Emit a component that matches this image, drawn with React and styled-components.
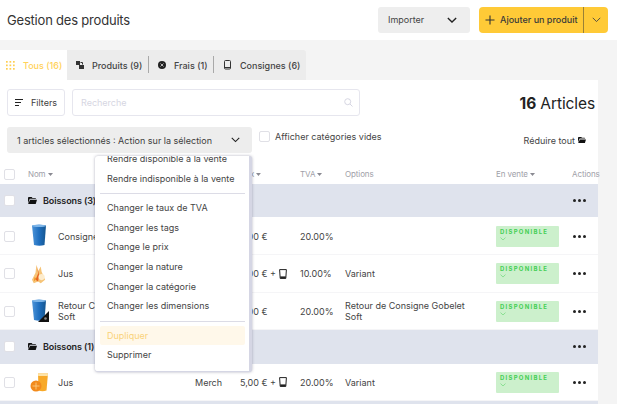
import React from "react";
import styled, { createGlobalStyle } from "styled-components";

const Global = createGlobalStyle`
  html, body { margin: 0; padding: 0; height: 404px; overflow: hidden; background: #f4f4f4; }
  body { font-family: Inter, "Noto Sans", sans-serif; color: #3c3c3c; -webkit-font-smoothing: antialiased; }
  * { box-sizing: border-box; }
`;

const Page = styled.div`width: 617px; height: 404px; overflow: hidden; background: #f4f4f4;`;
const Header = styled.header`
  height: 40px; background: #fff; display: flex; align-items: center; justify-content: space-between; padding: 0 9px 1px 7px;
`;
const Title = styled.h1`margin: 0; font-size: 13px; font-weight: 400; color: #333; letter-spacing: -.2px;`;
const HeaderActions = styled.div`display: flex; gap: 9px;`;
const ImportButton = styled.div`
  width: 92px; height: 26px; background: #eeeeee; border-radius: 3px; display: flex; align-items: center; justify-content: space-between;
  padding: 0 13px 0 10px; font-size: 9px; color: #444;
`;
const AddButton = styled.div`
  width: 129px; height: 26px; background: #ffca37; border-radius: 4px; display: flex; align-items: center; font-size: 9px; font-weight: 500; color: #3a3a3a;
`;
const AddMain = styled.div`flex: 1; display: flex; align-items: center; gap: 5px; padding-left: 6px; height: 100%; border-right: 1px solid #9a8136; white-space: nowrap;`;
const AddCaret = styled.div`width: 24px; display: flex; justify-content: center; align-items: center;`;

const TabBar = styled.nav`
  margin-top: 10px; width: 306px; height: 30px; display: flex; background: #ececec; border-radius: 0 3px 0 0;
`;
const Tab = styled.div`
  display: flex; align-items: center; gap: 8px; height: 100%; font-size: 9px; font-weight: 500; padding-left: ${p => p.$pl}px; width: ${p => p.$w}px; white-space: nowrap;
  color: ${p => (p.$active ? "#ffd25a" : "#444")};
  background: ${p => (p.$active ? "#fff" : "transparent")};
  position: relative;
  ${p => p.$sep && `&::after { content: ""; position: absolute; right: 0; top: 6px; height: 17px; width: 1px; background: #a9a9a9; }`}
`;

const Panel = styled.main`width: 598px; background: #fff; height: 324px;`;
const Tools = styled.div`display: flex; justify-content: space-between; padding: 9px 3px 0 7px;`;
const ToolsLeft = styled.div`display: flex; flex-direction: column; gap: 11px;`;
const SearchRow = styled.div`display: flex; gap: 7px;`;
const FilterButton = styled.div`
  width: 58px; height: 27px; border: 1px solid #e6e6ee; border-radius: 3px; display: flex; align-items: center; gap: 8px; padding-left: 7px; font-size: 9px; color: #3d3d3d;
`;
const SearchBox = styled.div`
  width: 288px; height: 27px; border: 1px solid #e6e6ee; border-radius: 3px; display: flex; align-items: center; justify-content: space-between;
  padding: 0 6px 0 8px; font-size: 9px; color: #d6d6e2;
`;
const ActionRow = styled.div`display: flex; gap: 7px; position: relative; height: 26px;`;
const ActionSelect = styled.div`
  width: 245px; height: 26px; background: #ededed; border-radius: 3px; display: flex; align-items: center; justify-content: space-between;
  padding: 0 12px 0 10px; font-size: 9px; color: #3d3d3d; white-space: nowrap;
`;
const EmptyOption = styled.label`display: flex; gap: 5px; font-size: 9px; line-height: 12px; color: #444; padding-top: 4px; height: 16px; white-space: nowrap;`;
const Box = styled.span`
  display: block; width: 11px; height: 11px; border: 1px solid #e0e0e6; border-radius: 2px; background: #fff; flex: none;
`;
const ToolsRight = styled.div`display: flex; flex-direction: column; align-items: flex-end;`;
const Count = styled.div`font-size: 15.5px; color: #222; height: 27px; line-height: 30px; letter-spacing: -.1px; b { font-weight: 700; }`;
const Collapse = styled.div`display: flex; align-items: center; gap: 3px; margin-top: 18px; margin-right: 9px; height: 12px; font-size: 9px; color: #444;`;

const Table = styled.div`margin-top: 7px;`;
const grid = `display: grid; grid-template-columns: 28px 167px 45px 60px 45px 151px 76px 26px; align-items: center;`;
const HeadRow = styled.div`${grid} height: 24px; font-size: 8px; letter-spacing: -.1px; color: #a0a0a8; padding-top: 4px;`;
const SortLabel = styled.span`display: flex; align-items: center; gap: 2px; white-space: nowrap; ${p => p.$end && "justify-content: flex-end; width: 21px;"}`;
const CheckCell = styled.div`padding-left: 4px;`;
const GroupRow = styled.div`${grid} height: 33.4px; background: #dfe3ed;`;
const GroupName = styled.div`display: flex; align-items: center; gap: 6px; font-size: 9px; font-weight: 600; color: #222; grid-column: 2 / 7; white-space: nowrap; letter-spacing: -.1px;`;
const Row = styled.div`${grid} height: 37.6px; font-size: 9px; color: #444; border-bottom: 1px solid #f5f5f7; padding-top: 1px;`;
const NameCell = styled.div`display: flex; align-items: center; gap: 9px; white-space: nowrap; line-height: 11px;`;
const Thumb = styled.div`width: 20px; display: flex; justify-content: center; flex: none; margin-left: 1px;`;
const PriceCell = styled.div`display: flex; align-items: center; gap: 3px; white-space: nowrap;`;
const OptionCell = styled.div`line-height: 11px; max-width: 130px;`;
const Badge = styled.div`
  width: 63px; height: 21px; background: #ccf0cc; border-radius: 1px; padding: 3px 4px; font-size: 6px; font-weight: 700; letter-spacing: 1.25px; color: #45cf55; line-height: 6px; white-space: nowrap;
  svg { display: block; margin-top: 2px; }
`;
const Dots = styled.div`display: flex; gap: 2px; margin-left: 1px;`;
const Dot = styled.i`display: block; width: 3px; height: 3px; border-radius: 50%; background: #222;`;

const Menu = styled.div`
  position: absolute; left: 88px; top: 29px; width: 157px; height: 216px; background: #fff; overflow: hidden; z-index: 5;
  border-right: 3px solid #d5d6e4; border-bottom: 1px solid #d5d6e4; border-radius: 3px; box-shadow: 0 0 3px rgba(80,80,110,.45);
  padding: 0 4px 0 5px;
`;
const MenuList = styled.div`margin-top: -7px;`;
const MenuItem = styled.div`
  height: 19.7px; line-height: 19.7px; font-size: 9px; padding-left: 7px; white-space: nowrap; border-radius: 2px;
  color: ${p => (p.$hl ? "#fad37a" : "#444")}; background: ${p => (p.$hl ? "#fff8ea" : "transparent")};
`;
const MenuLine = styled.div`height: 1px; background: #dcdce6; margin: 5px 0 3.5px;`;

const Chevron = ({ w = 12, sw = 2, c = "#222" }) => (
  <svg width={w} height={w * 0.6} viewBox="0 0 12 7" fill="none"><path d="M1 1l5 5 5-5" stroke={c} strokeWidth={sw} /></svg>
);
const Caret = () => <svg width="5" height="3" viewBox="0 0 5 3"><path d="M0 0h5L2.5 3z" fill="#8a8a92" /></svg>;
const Folder = ({ w = 9 }) => (
  <svg width={w} height={w * 0.8} viewBox="0 0 10 8"><path d="M0 1q0-1 1-1h3l1 1h3q1 0 1 1H2L0 7zM2.3 3H10L8.5 8H0z" fill="#111" /></svg>
);
const Glass = ({ s = 10 }) => (
  <svg width={s * 0.8} height={s} viewBox="0 0 8 10" fill="none"><path d="M.6.6h6.8L6.8 9.4H1.2z" stroke="#222" strokeWidth="1" /><path d="M1.2 7.4h5.6v2H1.2z" fill="#222" /></svg>
);
const Cup = ({ deposit }) => (
  <svg width="19" height="24" viewBox="-1 0 19 24">
    <defs><linearGradient id="cupg" x1="0" x2="1"><stop offset="0" stopColor="#4d94d8" /><stop offset=".5" stopColor="#1f6fc0" /><stop offset="1" stopColor="#15568f" /></linearGradient></defs>
    <path d="M1 1.500q7-1.500 14 0L13.500 21q-5 1.500-10.500 0z" fill="url(#cupg)" />
    <ellipse cx="8" cy="1.800" rx="7" ry="1.300" fill="#7db5e8" />
    {deposit && <path d="M18 12v11H7z" fill="#111" />}
    {deposit && <circle cx="14.500" cy="19.500" r="1.300" fill="#888" />}
  </svg>
);
const Fruit = () => (
  <svg width="14" height="22" viewBox="0 0 16 23">
    <path d="M5 1l2 7 3-5 1 6 4 9-5 4-3-2-5 2-2-4 4-8z" fill="#f6c477" />
    <path d="M6 3l1 8-3 7 3 2 1-8z" fill="#e8641f" />
    <circle cx="11" cy="15" r="3.500" fill="#fdeccd" />
    <path d="M3 15l2 2-3 3z" fill="#f29322" />
  </svg>
);
const Juice = () => (
  <svg width="19" height="20" viewBox="0 0 19 20">
    <path d="M8 1.500h10L16.500 18.500q-4 1.500-8 0z" fill="#f8a928" />
    <path d="M8 1.500h10l-.2 2.500H8.200z" fill="#fde3a8" />
    <circle cx="6" cy="14" r="5.500" fill="#f28a1c" />
    <path d="M6 10.500v7M2.500 14h7" stroke="#fcd28d" strokeWidth=".8" />
  </svg>
);

const items1 = ["Changer le taux de TVA", "Changer les tags", "Change le prix", "Changer la nature", "Changer la catégorie", "Changer les dimensions"];

const rows = {
  a: [
    { icon: <Cup />, name: "Consigne", price: "5,00 €", tva: "20.00%" },
    { icon: <Fruit />, name: "Jus", price: "5,00 € +", glass: true, tva: "10.00%", opt: "Variant" },
    { icon: <Cup deposit />, name: <>Retour Consigne<br />Soft</>, price: "5,00 €", tva: "20.00%", opt: "Retour de Consigne Gobelet Soft" },
  ],
  b: [{ icon: <Juice />, name: "Jus", nature: "Merch", price: "5,00 € +", glass: true, tva: "20.00%", opt: "Variant" }],
};

const ThreeDots = () => <Dots><Dot /><Dot /><Dot /></Dots>;

const Product = ({ r }) => (
  <Row>
    <CheckCell><Box /></CheckCell>
    <NameCell><Thumb>{r.icon}</Thumb><span>{r.name}</span></NameCell>
    <div>{r.nature}</div>
    <PriceCell>{r.price}{r.glass && <Glass />}</PriceCell>
    <div>{r.tva}</div>
    <OptionCell>{r.opt}</OptionCell>
    <Badge>DISPONIBLE<Chevron w={6} sw={1} c="#45cf55" /></Badge>
    <ThreeDots />
  </Row>
);

const Group = ({ label }) => (
  <GroupRow>
    <CheckCell><Box /></CheckCell>
    <GroupName><Folder />{label}</GroupName>
    <div />
    <ThreeDots />
  </GroupRow>
);

export default function App() {
  return (
    <Page>
      <Global />
      <Header>
        <Title>Gestion des produits</Title>
        <HeaderActions>
          <ImportButton>Importer<Chevron w={10} sw={1.6} /></ImportButton>
          <AddButton>
            <AddMain>
              <svg width="10" height="10" viewBox="0 0 10 10"><path d="M5 .5v9M.5 5h9" stroke="#333" strokeWidth="1.100" /></svg>
              Ajouter un produit
            </AddMain>
            <AddCaret><Chevron w={9} sw={1.200} c="#444" /></AddCaret>
          </AddButton>
        </HeaderActions>
      </Header>

      <TabBar>
        <Tab $active $pl={6} $w={67}>
          <svg width="9" height="9" viewBox="0 0 9 9" fill="#ffcf50">
            {[0, 3.500, 7].flatMap(x => [0, 3.500, 7].map(y => <rect key={`${x}-${y}`} x={x} y={y} width="1.700" height="1.700" />))}
          </svg>
          Tous (16)
        </Tab>
        <Tab $pl={9} $w={82} $sep>
          <svg width="8" height="8" viewBox="0 0 8 8"><path d="M0 0h4v4H0zM3 4h5v4H3z" fill="#333" /><path d="M4.500 1.500h2v2" stroke="#333" fill="none" /></svg>
          Produits (9)
        </Tab>
        <Tab $pl={9} $w={65} $sep>
          <svg width="8" height="8" viewBox="0 0 8 8"><circle cx="4" cy="4" r="4" fill="#222" /><path d="M2.500 2.500l3 3M5.500 2.500l-3 3" stroke="#ddd" strokeWidth=".8" /></svg>
          Frais (1)
        </Tab>
        <Tab $pl={10} $w={92}>
          <svg width="7" height="10" viewBox="0 0 7 10" fill="none" style={{ marginRight: 1 }}><rect x=".5" y=".5" width="6" height="8.500" rx="1" stroke="#333" /><path d="M1 7.500h5" stroke="#333" /></svg>
          Consignes (6)
        </Tab>
      </TabBar>

      <Panel>
        <Tools>
          <ToolsLeft>
            <SearchRow>
              <FilterButton>
                <svg width="8" height="7" viewBox="0 0 8 7"><path d="M0 .5h8M0 3.500h6M0 6.500h4" stroke="#222" /></svg>
                Filters
              </FilterButton>
              <SearchBox>
                Recherche
                <svg width="9" height="9" viewBox="0 0 9 9" fill="none"><circle cx="3.700" cy="3.700" r="3" stroke="#d6d6e2" /><path d="M6 6l2.500 2.500" stroke="#d6d6e2" /></svg>
              </SearchBox>
            </SearchRow>
            <ActionRow>
              <ActionSelect>1 articles sélectionnés : Action sur la sélection<Chevron w={9} sw={1.500} /></ActionSelect>
              <EmptyOption><Box />Afficher catégories vides</EmptyOption>
              <Menu>
                <MenuList>
                  <MenuItem>Rendre disponible à la vente</MenuItem>
                  <MenuItem>Rendre indisponible à la vente</MenuItem>
                  <MenuLine />
                  {items1.map(t => <MenuItem key={t}>{t}</MenuItem>)}
                  <MenuLine />
                  <MenuItem $hl>Dupliquer</MenuItem>
                  <MenuItem>Supprimer</MenuItem>
                </MenuList>
              </Menu>
            </ActionRow>
          </ToolsLeft>
          <ToolsRight>
            <Count><b>16</b> Articles</Count>
            <Collapse>Réduire tout<Folder w={8} /></Collapse>
          </ToolsRight>
        </Tools>

        <Table>
          <HeadRow>
            <CheckCell><Box /></CheckCell>
            <SortLabel>Nom<Caret /></SortLabel>
            <div />
            <SortLabel $end>Prix<Caret /></SortLabel>
            <SortLabel>TVA<Caret /></SortLabel>
            <div>Options</div>
            <SortLabel>En vente<Caret /></SortLabel>
            <div>Actions</div>
          </HeadRow>
          <Group label="Boissons (3)" />
          {rows.a.map((r, i) => <Product key={i} r={r} />)}
          <Group label="Boissons (1)" />
          {rows.b.map((r, i) => <Product key={i} r={r} />)}
          <Group label="" />
        </Table>
      </Panel>
    </Page>
  );
}
